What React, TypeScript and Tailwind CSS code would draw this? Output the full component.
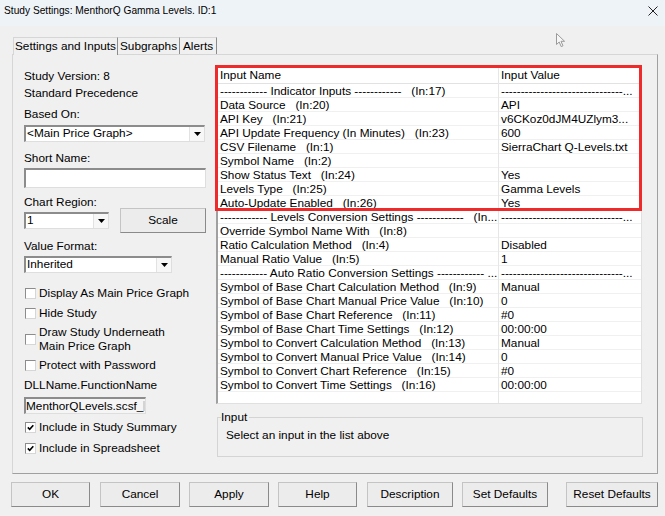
import React from 'react';

const SUNKEN =
  'border-t-2 border-l-2 border-t-[#8c8c8c] border-l-[#8c8c8c] border-r border-b border-r-[#dedede] border-b-[#dedede]';
const RAISED =
  'border border-t-[#c4c4c4] border-l-[#c4c4c4] border-r-[#8a8a8a] border-b-[#8a8a8a] bg-[#ececec]';

type Row = { name: string; value: string };

const rows: Row[] = [
  { name: '------------ Indicator Inputs ------------   (In:17)', value: '-------------------------------...' },
  { name: 'Data Source   (In:20)', value: 'API' },
  { name: 'API Key   (In:21)', value: 'v6CKoz0dJM4UZlym3...' },
  { name: 'API Update Frequency (In Minutes)   (In:23)', value: '600' },
  { name: 'CSV Filename   (In:1)', value: 'SierraChart Q-Levels.txt' },
  { name: 'Symbol Name   (In:2)', value: '' },
  { name: 'Show Status Text   (In:24)', value: 'Yes' },
  { name: 'Levels Type   (In:25)', value: 'Gamma Levels' },
  { name: 'Auto-Update Enabled   (In:26)', value: 'Yes' },
  { name: '------------ Levels Conversion Settings ------------   (In...', value: '-------------------------------...' },
  { name: 'Override Symbol Name With   (In:8)', value: '' },
  { name: 'Ratio Calculation Method   (In:4)', value: 'Disabled' },
  { name: 'Manual Ratio Value   (In:5)', value: '1' },
  { name: '------------ Auto Ratio Conversion Settings ------------ ...', value: '-------------------------------...' },
  { name: 'Symbol of Base Chart Calculation Method   (In:9)', value: 'Manual' },
  { name: 'Symbol of Base Chart Manual Price Value   (In:10)', value: '0' },
  { name: 'Symbol of Base Chart Reference   (In:11)', value: '#0' },
  { name: 'Symbol of Base Chart Time Settings   (In:12)', value: '00:00:00' },
  { name: 'Symbol to Convert Calculation Method   (In:13)', value: 'Manual' },
  { name: 'Symbol to Convert Manual Price Value   (In:14)', value: '0' },
  { name: 'Symbol to Convert Chart Reference   (In:15)', value: '#0' },
  { name: 'Symbol to Convert Time Settings   (In:16)', value: '00:00:00' },
];

const Select: React.FC<{ value: string; className: string }> = ({ value, className }) => (
  <div className={`${className} h-[17px] bg-white flex items-stretch ${SUNKEN}`}>
    <span className="flex-1 pl-px leading-[13px] whitespace-nowrap overflow-hidden">{value}</span>
    <span className="w-[15px] flex items-center justify-center bg-[#f7f7f7] border-l border-[#e2e2e2]">
      <svg width="7" height="4" viewBox="0 0 7 4">
        <path d="M0 0 H7 L3.5 4 Z" fill="#000" />
      </svg>
    </span>
  </div>
);

const Check: React.FC<{ label: React.ReactNode; checked?: boolean; className?: string }> = ({
  label,
  checked,
  className = '',
}) => (
  <div className={`flex items-center ${className}`}>
    <span className="ml-px w-[11px] h-[11px] bg-white border border-t-[#8c8c8c] border-l-[#8c8c8c] border-r-[#d6d6d6] border-b-[#d6d6d6] flex items-center justify-center shrink-0">
      {checked && (
        <svg width="7" height="7" viewBox="0 0 7 7">
          <path d="M0.8 3.4 L2.7 5.3 L6.3 1.2" stroke="#000" strokeWidth="1.6" fill="none" />
        </svg>
      )}
    </span>
    <span className="ml-[3px] leading-[14px]">{label}</span>
  </div>
);

const Button: React.FC<{ label: string; className: string }> = ({ label, className }) => (
  <div className={`${className} h-[25px] flex items-center justify-center ${RAISED}`}>{label}</div>
);

export default function App() {
  return (
    <div className="w-[665px] h-[516px] bg-[#f0f0f0] relative overflow-hidden font-['Liberation_Sans',Arial,sans-serif] text-[11.8px] text-black">
      {/* title bar */}
      <div className="h-[26px] bg-[#eef3f8] flex items-start justify-between pt-[4px] pl-[4px] pr-[7px]">
        <span className="text-[10.2px] leading-[14px]">Study Settings: MenthorQ Gamma Levels. ID:1</span>
        <svg width="10" height="10" viewBox="0 0 10 10" className="mt-[2px]">
          <path d="M0.5 0.5 L9.5 9.5 M9.5 0.5 L0.5 9.5" stroke="#222" strokeWidth="1" />
        </svg>
      </div>

      {/* tabs */}
      <div className="flex items-end ml-[13px] mt-[11px] h-[17px]">
        <div className="relative z-10 -mb-px h-[18px] w-[105px] pt-px bg-[#f0f0f0] border-l border-t border-r border-l-[#d6d6d6] border-t-[#d6d6d6] border-r-[#8c8c8c] flex items-center justify-center">
          Settings and Inputs
        </div>
        <div className="h-[17px] w-[62px] pt-px border-t border-r border-t-[#d6d6d6] border-r-[#8c8c8c] flex items-center justify-center">
          Subgraphs
        </div>
        <div className="h-[17px] w-[37px] pt-px border-t border-r border-t-[#d6d6d6] border-r-[#8c8c8c] flex items-center justify-center">
          Alerts
        </div>
      </div>

      {/* tab panel */}
      <div className="ml-[12px] w-[646px] h-[420px] border border-t-[#d6d6d6] border-l-[#d6d6d6] border-r-[#a0a0a0] border-b-[#a0a0a0] flex">
        {/* left column */}
        <div className="ml-[11px] w-[183px] pt-[14px] flex flex-col">
          <div className="h-[14px] leading-[14px]">Study Version: 8</div>
          <div className="h-[14px] leading-[14px] mt-[3px]">Standard Precedence</div>
          <div className="h-[14px] leading-[14px] mt-[7px]">Based On:</div>
          <Select value="<Main Price Graph>" className="mt-[4px] w-[181px]" />
          <div className="h-[14px] leading-[14px] mt-[9px]">Short Name:</div>
          <div className={`mt-[3px] w-[182px] h-[20px] bg-white ${SUNKEN}`} />
          <div className="h-[14px] leading-[14px] mt-[7px]">Chart Region:</div>
          <div className="h-[23px] flex items-center">
            <Select value="1" className="w-[85px]" />
            <Button label="Scale" className="ml-[11px] w-[86px] h-[23px]" />
          </div>
          <div className="h-[14px] leading-[14px] mt-[7px]">Value Format:</div>
          <Select value="Inherited" className="mt-[3px] w-[148px]" />
          <Check label="Display As Main Price Graph" className="mt-[13px]" />
          <Check label="Hide Study" className="mt-[6px]" />
          <Check
            label={
              <>
                Draw Study Underneath
                <br />
                Main Price Graph
              </>
            }
            className="mt-[5px]"
          />
          <Check label="Protect with Password" className="mt-[5px]" />
          <div className="h-[14px] leading-[14px] mt-[6px]">DLLName.FunctionName</div>
          <div className={`mt-[5px] w-[122px] h-[17px] bg-[#f5f5f5] ${SUNKEN} flex items-center whitespace-nowrap overflow-hidden`}>
            <span className="leading-[13px]">MenthorQLevels.scsf_</span>
            <span className="w-[4px] h-[10px] bg-[#d4d4d4]" />
          </div>
          <Check label="Include in Study Summary" checked className="mt-[6px]" />
          <Check label="Include in Spreadsheet" checked className="mt-[7px]" />
        </div>

        {/* right column */}
        <div className="ml-[9px] w-[427px] pt-[10px] flex flex-col">
          <div className="relative">
            <div className="w-[426px] h-[339px] bg-white border-l-2 border-t-2 border-l-[#a0a0a0] border-t-[#a0a0a0] border-r border-b border-r-[#e0e0e0] border-b-[#e0e0e0] flex">
              <div className="w-[281px] h-full border-r border-[#e6e6e6]">
                <div className="h-[17px] border-b border-[#e2e2e2] pl-[2px] leading-[17px]">Input Name</div>
                {rows.map((r, i) => (
                  <div key={i} className="h-[14px] border-b border-[#f0f0f0] pl-[2px] leading-[15px] whitespace-pre">
                    {r.name}
                  </div>
                ))}
              </div>
              <div className="flex-1 h-full">
                <div className="h-[17px] border-b border-[#e2e2e2] pl-[2px] leading-[17px]">Input Value</div>
                {rows.map((r, i) => (
                  <div key={i} className="h-[14px] border-b border-[#f0f0f0] pl-[2px] leading-[15px] whitespace-pre">
                    {r.value}
                  </div>
                ))}
              </div>
            </div>
            {/* highlight box */}
            <div className="absolute left-[-1px] top-0 w-[427px] h-[146px] border-[3px] border-[#ef2a2a] pointer-events-none" />
          </div>

          <div className="relative mt-[13px] ml-px w-[426px] h-[40px] border border-[#d4d4d4]">
            <span className="absolute left-[3px] top-[-8px] bg-[#f0f0f0] pr-[2px] leading-[14px]">Input</span>
            <div className="pl-[8px] pt-[10px] leading-[14px]">Select an input in the list above</div>
          </div>
        </div>
      </div>

      {/* bottom buttons */}
      <div className="flex mt-[8px]">
        <Button label="OK" className="ml-[11px] w-[79px]" />
        <Button label="Cancel" className="ml-[10px] w-[80px]" />
        <Button label="Apply" className="ml-[9px] w-[80px]" />
        <Button label="Help" className="ml-[9px] w-[79px]" />
        <Button label="Description" className="ml-[10px] w-[86px]" />
        <Button label="Set Defaults" className="ml-[9px] w-[86px]" />
        <Button label="Reset Defaults" className="ml-[18px] w-[92px]" />
      </div>

      {/* mouse cursor */}
      <svg width="10" height="15" viewBox="0 0 10 15" className="absolute left-[556px] top-[33px]">
        <path d="M0.5 0.5 L0.5 11.5 L3.2 9 L5.2 13.6 L7 12.8 L5 8.3 L8.6 8.3 Z" fill="#f6f6f6" stroke="#9a9a9a" strokeWidth="1" />
      </svg>
    </div>
  );
}
